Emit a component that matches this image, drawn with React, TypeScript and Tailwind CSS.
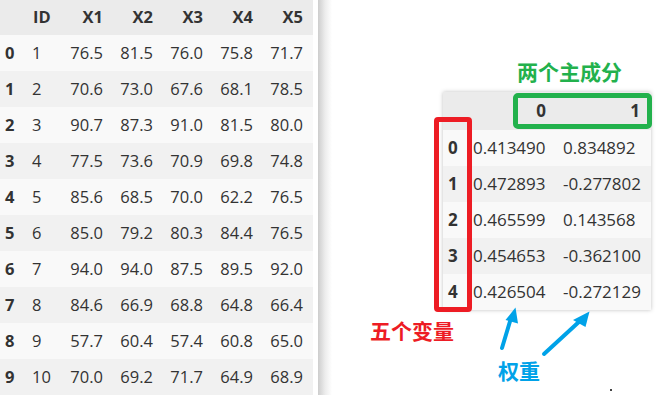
import React from "react";

const leftRows = [
  [1, "76.5", "81.5", "76.0", "75.8", "71.7"],
  [2, "70.6", "73.0", "67.6", "68.1", "78.5"],
  [3, "90.7", "87.3", "91.0", "81.5", "80.0"],
  [4, "77.5", "73.6", "70.9", "69.8", "74.8"],
  [5, "85.6", "68.5", "70.0", "62.2", "76.5"],
  [6, "85.0", "79.2", "80.3", "84.4", "76.5"],
  [7, "94.0", "94.0", "87.5", "89.5", "92.0"],
  [8, "84.6", "66.9", "68.8", "64.8", "66.4"],
  [9, "57.7", "60.4", "57.4", "60.8", "65.0"],
  [10, "70.0", "69.2", "71.7", "64.9", "68.9"],
];

const rightRows = [
  ["0.413490", "0.834892"],
  ["0.472893", "-0.277802"],
  ["0.465599", "0.143568"],
  ["0.454653", "-0.362100"],
  ["0.426504", "-0.272129"],
];

export default function App() {
  return (
    <div className="relative w-[657px] h-[395px] overflow-hidden bg-white flex font-['Open_Sans',sans-serif] text-[#333]">
      {/* Left table */}
      <div className="w-[313px] flex flex-col text-[16.5px]">
        <div className="flex h-[36px] items-center bg-[#ebebeb] font-bold">
          <div className="w-[24px]" />
          <div className="w-[39px] pl-[9px]">ID</div>
          {["X1", "X2", "X3", "X4", "X5"].map((h) => (
            <div key={h} className="w-[50px] pr-[10px] text-right">
              {h}
            </div>
          ))}
        </div>
        {leftRows.map((r, i) => (
          <div
            key={i}
            className={`flex h-[36px] shrink-0 items-center ${i % 2 === 0 ? "bg-[#f9f9f9]" : "bg-[#f1f1f1]"}`}
          >
            <div className="w-[24px] pl-[5px] font-bold">{i}</div>
            <div className="w-[39px] pl-[8px]">{r[0]}</div>
            {r.slice(1).map((v, j) => (
              <div key={j} className="w-[50px] pr-[10px] text-right">
                {v}
              </div>
            ))}
          </div>
        ))}
      </div>

      {/* panel edge shadow */}
      <div className="ml-[5px] w-[14px] h-full bg-gradient-to-r from-[#cdcdcd] via-[#ececec] to-white" />

      {/* Right table */}
      <div className="pl-[111px] pt-[92px]">
        <div className="w-[208px] flex flex-col text-[17px] shadow-[0_0_4px_rgba(0,0,0,0.25)]">
          <div className="flex h-[38px] items-center bg-[#ebebeb] font-bold">
            <div className="w-[26px]" />
            <div className="w-[88px] pr-[11px] text-right">0</div>
            <div className="w-[94px] pr-[11px] text-right">1</div>
          </div>
          {rightRows.map((r, i) => (
            <div
              key={i}
              className={`flex h-[36px] items-center ${i % 2 === 0 ? "bg-[#f9f9f9]" : "bg-[#f1f1f1]"}`}
            >
              <div className="w-[26px] pl-[5px] font-bold">{i}</div>
              <div className="w-[88px] pl-[4px]">{r[0]}</div>
              <div className="w-[94px] pl-[6px]">{r[1]}</div>
            </div>
          ))}
        </div>
      </div>

      {/* Annotations */}
      <div className="absolute left-[513px] top-[93px] w-[139px] h-[36px] border-[5px] border-[#22b14c] rounded-[5px]" />
      <div className="absolute left-[434px] top-[117px] w-[38px] h-[195px] border-[5px] border-[#ed1c24] rounded-[4px]" />

      <div className="absolute left-[517px] top-[61px] text-[21px] leading-[21px] font-bold text-[#22b14c] font-['Noto_Sans_CJK_SC',sans-serif]">
        两个主成分
      </div>
      <div className="absolute left-[370px] top-[320px] text-[21px] leading-[21px] font-bold text-[#ed1c24] font-['Noto_Sans_CJK_SC',sans-serif]">
        五个变量
      </div>
      <div className="absolute left-[498px] top-[360px] text-[21px] leading-[21px] font-bold text-[#00a2e8] font-['Noto_Sans_CJK_SC',sans-serif]">
        权重
      </div>

      <svg className="absolute left-0 top-0" width="657" height="395" viewBox="0 0 657 395">
        <line x1="502" y1="348" x2="511" y2="318" stroke="#00a2e8" strokeWidth="4" strokeLinecap="round" />
        <polygon points="515.5,307.5 505.5,320 518,323.5" fill="#00a2e8" />
        <line x1="544" y1="354" x2="581" y2="320" stroke="#00a2e8" strokeWidth="4" strokeLinecap="round" />
        <polygon points="589.5,311.5 573,320 585.5,327" fill="#00a2e8" />
        <rect x="610" y="389" width="2" height="2" fill="#444" />
      </svg>
    </div>
  );
}
